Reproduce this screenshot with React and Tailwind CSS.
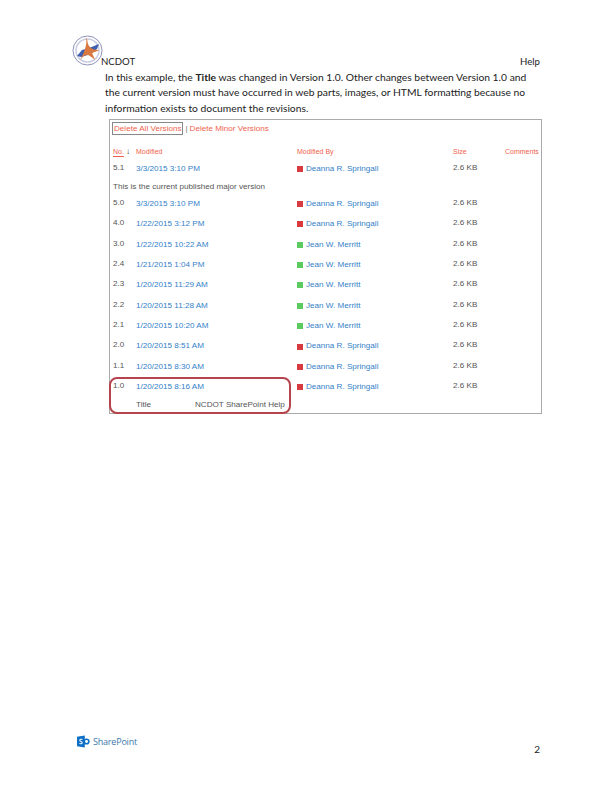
const rows = [
  { no: '5.1', date: '3/3/2015 3:10 PM', by: 'Deanna R. Springall', red: true, note: 'This is the current published major version' },
  { no: '5.0', date: '3/3/2015 3:10 PM', by: 'Deanna R. Springall', red: true },
  { no: '4.0', date: '1/22/2015 3:12 PM', by: 'Deanna R. Springall', red: true },
  { no: '3.0', date: '1/22/2015 10:22 AM', by: 'Jean W. Merritt' },
  { no: '2.4', date: '1/21/2015 1:04 PM', by: 'Jean W. Merritt' },
  { no: '2.3', date: '1/20/2015 11:29 AM', by: 'Jean W. Merritt' },
  { no: '2.2', date: '1/20/2015 11:28 AM', by: 'Jean W. Merritt' },
  { no: '2.1', date: '1/20/2015 10:20 AM', by: 'Jean W. Merritt' },
  { no: '2.0', date: '1/20/2015 8:51 AM', by: 'Deanna R. Springall', red: true },
  { no: '1.1', date: '1/20/2015 8:30 AM', by: 'Deanna R. Springall', red: true },
  { no: '1.0', date: '1/20/2015 8:16 AM', by: 'Deanna R. Springall', red: true },
];

function NcdotLogo() {
  return (
    <svg width="31" height="31" viewBox="0 0 31 31" className="absolute left-[-29px] top-[-20px]">
      <circle cx="15.5" cy="15.5" r="14.5" fill="#fff" stroke="#8e93b8" strokeWidth="1" />
      <circle cx="15.5" cy="15.5" r="11.5" fill="#fff" stroke="#c9cce0" strokeWidth="1.5" />
      <path d="M5 21 L10 15 L17 13 L27 9 L25 14 L19 19 L9 22 Z" fill="#3f5fb0" />
      <path d="M14 3 C16 4 15 8 17 11 C19 14 23 15 27 15 C24 17 21 17 20 18 C21 20 22 22 23 25 C20 22 17 20 15 20 C12 20 10 23 8 25 C10 21 12 18 13 14 C14 10 15 7 14 3 Z" fill="#d9793f" />
    </svg>
  );
}

function SharePointLogo() {
  return (
    <div className="flex items-center gap-[3px]">
      <svg width="13" height="13" viewBox="0 0 15 14">
        <path d="M0 1.5 L9 0 V14 L0 12.5 Z" fill="#0f6fc6" />
        <circle cx="11" cy="7" r="3.6" fill="#0f6fc6" />
        <circle cx="11" cy="7" r="1.7" fill="#fff" />
        <path d="M6.2 4.6 C5 4 3.2 4.3 3.2 5.6 C3.2 7.4 6 6.6 6 8.4 C6 9.7 4 9.9 2.8 9.2" fill="none" stroke="#fff" strokeWidth="1.2" />
      </svg>
      <span className="text-[9px] leading-none font-['Open_Sans',sans-serif] tracking-[-0.2px] text-[#3a78ad]">SharePoint</span>
    </div>
  );
}

function VersionRow({ row }) {
  return (
    <>
      <div className="grid grid-cols-[23px_161px_156px_52px_1fr] h-[20.4px] items-center">
        <span className="text-[#555] -translate-y-px">{row.no}</span>
        <span className="text-[#3481c8]">{row.date}</span>
        <span className="flex items-center text-[#3481c8]">
          <span className={`w-[6px] h-[6px] mr-[3px] ${row.red ? 'bg-[#d93a3f]' : 'bg-[#5ccb5f]'}`} />
          {row.by}
        </span>
        <span className="text-[#555] -translate-y-px">2.6 KB</span>
        <span />
      </div>
      {row.note && <div className="h-[12px] leading-[12px] mt-px mb-px text-[#555]">{row.note}</div>}
    </>
  );
}

export default function App() {
  return (
    <div className="w-[612px] h-[792px] bg-white flex flex-col font-['Lato',sans-serif] text-[#222]">
      <div className="flex justify-between pl-[101px] pr-[72px] pt-[55px] text-[9.6px] leading-[14px]">
        <span className="relative">
          <NcdotLogo />
          NCDOT
        </span>
        <span>Help</span>
      </div>

      <p className="ml-[105px] w-[430px] mt-px text-[10.3px] leading-[15.4px]">
        In this example, the <b>Title</b> was changed in Version 1.0. Other changes between Version 1.0 and
        the current version must have occurred in web parts, images, or HTML formatting because no
        information exists to document the revisions.
      </p>

      <div className="relative ml-[109px] mt-[3px] w-[433px] h-[295px] border border-[#aaa] pl-[3px] font-['Liberation_Sans',sans-serif] text-[8.1px]">
        <div className="flex items-center pt-[2px] text-[8.1px] leading-[11px] text-[#f0624d]">
          <span className="border border-[#888] px-px ml-[-1px]">Delete All Versions</span>
          <span className="mx-[2px] text-[#777]">|</span>
          <span>Delete Minor Versions</span>
        </div>

        <div className="grid grid-cols-[23px_161px_156px_52px_1fr] mt-[11px] h-[12px] items-center text-[7px] text-[#f0624d]">
          <span className="flex items-center">
            <span className="underline underline-offset-2">No.</span>
            <span className="ml-[2px] text-[#333] text-[8px]">↓</span>
          </span>
          <span>Modified</span>
          <span>Modified By</span>
          <span>Size</span>
          <span>Comments</span>
        </div>

        <div className="mt-px">
          {rows.map(row => <VersionRow key={row.no} row={row} />)}
        </div>

        <div className="grid grid-cols-[23px_59px_1fr] w-[180px] mt-px h-[14px] items-center text-[#555]">
          <span />
          <span>Title</span>
          <span>NCDOT SharePoint Help</span>
        </div>

        <div className="absolute left-[-1px] top-[257px] w-[182px] h-[37px] rounded-[8px] border-2 border-[#b5444c]" />
      </div>

      <div className="mt-auto flex justify-between items-end pl-[77px] pr-[72px] pb-[36px]">
        <div className="mb-[8px]"><SharePointLogo /></div>
        <span className="text-[10px] leading-[14px]">2</span>
      </div>
    </div>
  );
}
